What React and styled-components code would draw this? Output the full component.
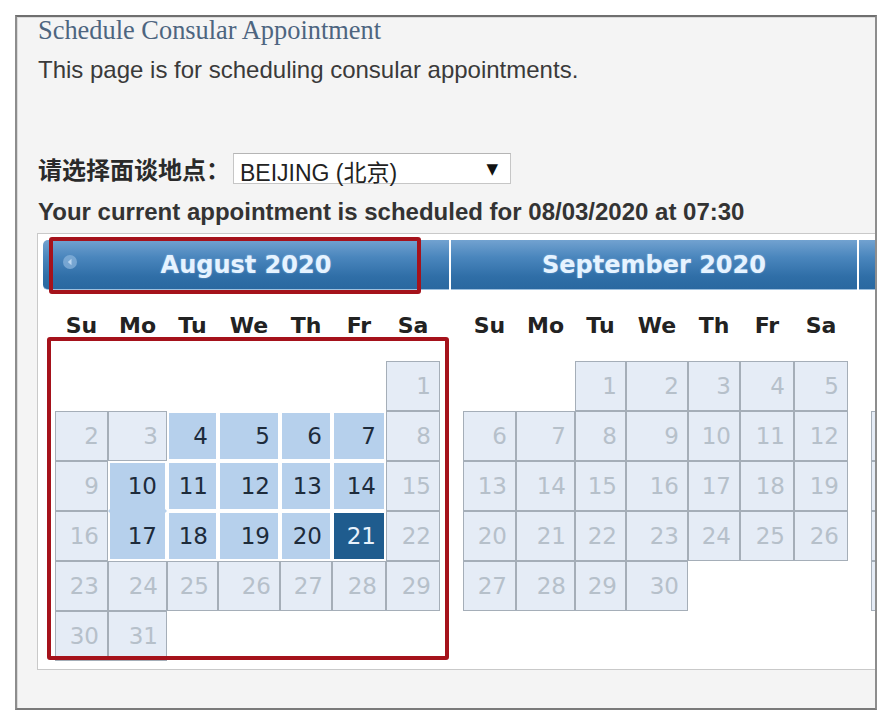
import styled, { createGlobalStyle } from "styled-components";

const GlobalStyle = createGlobalStyle`
  * {
    box-sizing: border-box;
  }
  body {
    margin: 0;
    background: #ffffff;
    font-family: "Liberation Sans", Arial, sans-serif;
  }
`;

const Page = styled.div`
  padding: 15px;
`;

const Panel = styled.div`
  position: relative;
  width: 862px;
  height: 695px;
  overflow: hidden;
  display: flex;
  flex-direction: column;
  align-items: flex-start;
  padding-left: 21px;
  background: #f4f4f4;
  border: 2px solid #8d8d8d;
  border-top-color: #6f6f6f;
  border-bottom-color: #7a7a7a;
  box-shadow: inset 1px 1px 0 #dadada;
`;

const Title = styled.h1`
  margin: 0;
  font-family: "Liberation Serif", "Times New Roman", serif;
  font-weight: normal;
  font-size: 26.4px;
  line-height: 26px;
  color: #4d6580;
  white-space: nowrap;
`;

const Intro = styled.p`
  margin: 13px 0 0;
  font-size: 24px;
  line-height: 28px;
  color: #3a3a3a;
  white-space: nowrap;
`;

const LocationRow = styled.div`
  display: flex;
  align-items: center;
  margin-top: 69px;
  height: 31px;
`;

const Label = styled.span`
  width: 195px;
  font-family: "Liberation Sans", "Noto Sans CJK SC", sans-serif;
  font-weight: bold;
  font-size: 24px;
  color: #2a2a2a;
  white-space: nowrap;
`;

const SelectBox = styled.div`
  display: flex;
  align-items: center;
  justify-content: space-between;
  width: 278px;
  height: 31px;
  padding: 4px 12px 0 6px;
  background: #ffffff;
  border: 1px solid #c6c6c6;
  border-top-color: #b5b5b5;
  font-family: "Liberation Sans", "Noto Sans CJK SC", sans-serif;
  font-size: 23px;
  color: #222;
`;

const Arrow = styled.span`
  margin-top: -4px;
  font-family: "DejaVu Sans", sans-serif;
  font-size: 15px;
  color: #111;
`;

const Current = styled.p`
  margin: 14px 0 0;
  font-weight: bold;
  font-size: 24px;
  line-height: 28px;
  color: #333;
  white-space: nowrap;
`;

const Widget = styled.div`
  position: relative;
  width: max-content;
  margin-top: 7px;
  margin-left: -1px;
  padding: 6px 0 8px 5px;
  background: #ffffff;
  border: 1px solid #c9c9c9;
  display: flex;
  gap: 2px;
  align-items: flex-start;
`;

const Month = styled.div`
  width: 406px;
  flex-shrink: 0;
`;

const MonthHeader = styled.div`
  position: relative;
  height: 50px;
  display: flex;
  align-items: center;
  justify-content: center;
  border-radius: ${(p) => (p.$first ? "5px 0 0 5px" : "0")};
  background: linear-gradient(#72a2d0 0%, #4a86bd 35%, #2f6ea7 75%, #2a68a0 100%);
  border-bottom: 1px solid #9ec0de;
  font-family: "DejaVu Sans", Verdana, sans-serif;
  font-weight: bold;
  font-size: 24px;
  color: #e6f3ff;
  text-shadow: 0 0 2px rgba(200, 230, 255, 0.5);
`;

const PrevIcon = styled.svg`
  position: absolute;
  left: 19px;
  top: 14px;
`;

const Grid = styled.div`
  display: grid;
  grid-template-columns: 53px 59px 51px 62px 52px 54px 54px;
  margin-left: 12px;
`;

const WeekRow = styled(Grid)`
  margin-top: 10px;
  margin-bottom: 11px;
  grid-auto-rows: 50px;
`;

const WeekDay = styled.div`
  display: flex;
  align-items: center;
  justify-content: center;
  font-family: "DejaVu Sans", Verdana, sans-serif;
  font-weight: bold;
  font-size: 22px;
  color: #222;
`;

const DayGrid = styled(Grid)`
  grid-auto-rows: 50px;
`;

const cellColors = {
  off: { bg: "#e5ecf6", border: "#a5aeb8", text: "#b6c0ca" },
  open: { bg: "#b6d0ec", border: "#ffffff", text: "#1d2b3b" },
  picked: { bg: "#1f5c8e", border: "#ffffff", text: "#e8f2fc" },
};

const Day = styled.div`
  display: flex;
  align-items: center;
  justify-content: flex-end;
  padding-right: 8px;
  font-family: "DejaVu Sans", Verdana, sans-serif;
  font-size: 23px;
  background: ${(p) => cellColors[p.$state].bg};
  color: ${(p) => cellColors[p.$state].text};
  border: ${(p) => (p.$state === "off" ? "1px" : "2px")} solid
    ${(p) => cellColors[p.$state].border};
  ${(p) => p.$joinDown && `border-bottom-color: ${cellColors[p.$state].bg};`}
  ${(p) => p.$joinUp && `border-top-color: ${cellColors[p.$state].bg};`}
`;

const Blank = styled.div``;

const Marker = styled.div`
  position: absolute;
  border: 4px solid #a5121b;
  border-radius: 3px;
  pointer-events: none;
`;

const weekDays = ["Su", "Mo", "Tu", "We", "Th", "Fr", "Sa"];

const months = [
  {
    name: "August 2020",
    start: 6,
    days: 31,
    open: [4, 5, 6, 7, 10, 11, 12, 13, 14, 17, 18, 19, 20],
    picked: 21,
  },
  { name: "September 2020", start: 2, days: 30, open: [], picked: null },
  // only the left edge of October shows past the panel's right side
  { name: "October 2020", start: 4, days: 31, open: [], picked: null, peek: true },
];

function MonthView({ month, first }) {
  const cells = [];
  for (let i = 0; i < month.start; i++) cells.push(null);
  for (let d = 1; d <= month.days; d++) cells.push(d);
  while (cells.length % 7) cells.push(null);

  const stateOf = (d) =>
    d === month.picked ? "picked" : month.open.includes(d) ? "open" : "off";

  return (
    <Month>
      <MonthHeader $first={first}>
        {first && (
          <PrevIcon width="16" height="16" viewBox="0 0 16 16">
            <circle cx="8" cy="8" r="7" fill="#88b3db" opacity="0.75" />
            <path d="M9.5 4.8 L5.8 8 L9.5 11.2 Z" fill="#b9d5ef" />
          </PrevIcon>
        )}
        {!month.peek && month.name}
      </MonthHeader>
      <WeekRow>
        {weekDays.map((w) => (
          <WeekDay key={w}>{!month.peek && w}</WeekDay>
        ))}
      </WeekRow>
      <DayGrid>
        {cells.map((d, i) => {
          if (d === null) return <Blank key={i} />;
          return (
            <Day
              key={i}
              $state={stateOf(d)}
              $joinDown={first && d === 10}
              $joinUp={first && d === 17}
            >
              {!month.peek && d}
            </Day>
          );
        })}
      </DayGrid>
    </Month>
  );
}

export default function App() {
  return (
    <>
      <GlobalStyle />
      <Page>
        <Panel>
          <Title>Schedule Consular Appointment</Title>
          <Intro>This page is for scheduling consular appointments.</Intro>
          <LocationRow>
            <Label>请选择面谈地点：</Label>
            <SelectBox>
              <span>BEIJING (北京)</span>
              <Arrow>▼</Arrow>
            </SelectBox>
          </LocationRow>
          <Current>
            Your current appointment is scheduled for 08/03/2020 at 07:30
          </Current>
          <Widget>
            {months.map((m, i) => (
              <MonthView key={m.name} month={m} first={i === 0} />
            ))}
            <Marker style={{ left: 11, top: 3, width: 372, height: 57 }} />
            <Marker style={{ left: 9, top: 103, width: 402, height: 323 }} />
          </Widget>
        </Panel>
      </Page>
    </>
  );
}
